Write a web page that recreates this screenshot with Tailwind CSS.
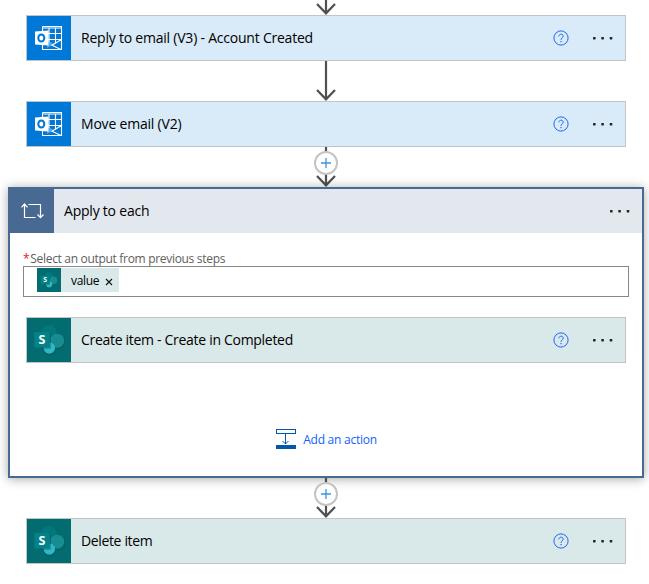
<!DOCTYPE html>
<html lang="en">
<head>
<meta charset="utf-8">
<title>Flow</title>
<script src="https://cdn.jsdelivr.net/npm/@tailwindcss/browser@4"></script>
</head>
<body class="bg-white overflow-hidden font-['Open_Sans','Noto_Sans',sans-serif] text-black">
<svg class="hidden">
  <defs>
    <symbol id="outlook" viewBox="0 0 44 44">
      <path d="M15.5 10.5H34.500V24M15.5 10.5V15M15.5 29V33.5H34.5V23.500L25 29.2L34 33.5M15 12H35M22 12V26M28.500 12V26.500M21 17.500H35M21 23.500H34" fill="none" stroke="#fff" stroke-width="1.1"/>
      <path d="M20 24L27 28.200L20 32Z" fill="#fff" opacity=".35"/>
      <path d="M8 15.500L21.500 14.500V29.500L8 28.500Z" fill="#fff"/>
      <ellipse cx="14.300" cy="22" rx="3" ry="3.500" fill="none" stroke="#0078d7" stroke-width="2"/>
    </symbol>
    <symbol id="sharepoint" viewBox="0 0 44 44">
      <circle cx="22.500" cy="17" r="9.200" fill="#035a5d" opacity=".35"/>
      <circle cx="30.500" cy="24" r="8" fill="#035a5d" opacity=".45"/>
      <circle cx="22.500" cy="31" r="6.600" fill="#035a5d" opacity=".45"/>
      <circle cx="22" cy="15.500" r="8.300" fill="#03787c"/>
      <circle cx="30.300" cy="22.700" r="7" fill="#1a9096" opacity=".9"/>
      <circle cx="22.300" cy="30" r="5.800" fill="#2fb8c4"/>
      <path d="M22 15h1.800v15.800H14V29z" fill="#034c50" opacity=".4"/>
      <rect x="7.300" y="14" width="15.400" height="15.600" rx="1" fill="#038387"/>
      <text x="14.900" y="26.200" text-anchor="middle" font-family="Open Sans, sans-serif" font-weight="700" font-size="12.500" fill="#fff">S</text>
    </symbol>
    <symbol id="help" viewBox="0 0 16 16">
      <circle cx="8" cy="8" r="7.100" fill="none" stroke="#2268f5" stroke-width="1"/>
      <path d="M5.900 6.300C5.900 3.500 10.200 3.500 10.200 6.100C10.200 7.700 8 7.900 8 9.900" fill="none" stroke="#2268f5" stroke-width="1"/>
      <rect x="7.400" y="11" width="1.200" height="1.200" fill="#2268f5"/>
    </symbol>
    <symbol id="dots" viewBox="0 0 22 4">
      <g fill="#222"><rect x="1" y="1" width="2.600" height="2.400" rx=".6"/><rect x="9.300" y="1" width="2.600" height="2.400" rx=".6"/><rect x="17.700" y="1" width="2.600" height="2.400" rx=".6"/></g>
    </symbol>
  </defs>
</svg>
<main class="ml-2 w-[636px] flex flex-col items-center">
  <svg class="block shrink-0" width="24" height="15" fill="none" stroke="#505050" stroke-width="2.200"><path d="M12 0V13.300M3 4L12 13.300L21 4"/></svg>

  <section class="w-[600px] h-[46px] border border-[#c4c4c4] bg-[#d9eaf8] flex items-center">
    <div class="size-11 bg-[#0078d7]"><svg class="size-11"><use href="#outlook"/></svg></div>
    <span class="ml-2.5 pb-0.5 flex-1 text-[14px] tracking-[-0.22px] whitespace-nowrap">Reply to email (V3) - Account Created</span>
    <svg class="size-4 mr-[23px] mb-px"><use href="#help"/></svg>
    <svg class="w-[22px] h-1 mr-[11px]"><use href="#dots"/></svg>
  </section>

  <svg class="block shrink-0" width="24" height="40" fill="none" stroke="#505050" stroke-width="2.200"><path d="M12 0V38.300M3 29L12 38.300L21 29"/></svg>

  <section class="w-[600px] h-[46px] border border-[#c4c4c4] bg-[#d9eaf8] flex items-center">
    <div class="size-11 bg-[#0078d7]"><svg class="size-11"><use href="#outlook"/></svg></div>
    <span class="ml-2.5 pb-0.5 flex-1 text-[14px] tracking-[-0.2px] whitespace-nowrap">Move email (V2)</span>
    <svg class="size-4 mr-[23px] mb-px"><use href="#help"/></svg>
    <svg class="w-[22px] h-1 mr-[11px]"><use href="#dots"/></svg>
  </section>

  <svg class="block shrink-0" width="24" height="40" fill="none" stroke="#505050" stroke-width="2.200"><path d="M12 0V38.300M3 29L12 38.300L21 29"/><circle cx="12" cy="16" r="11" fill="#fff" stroke="#c4c4c4" stroke-width="2"/><path d="M12 11V21M7 16H17" stroke="#3a96dd" stroke-width="1.300"/></svg>

  <section class="w-[636px] h-[291px] border-2 border-[#486991] bg-white shadow-[0_1px_10px_rgba(0,0,0,0.35)] flex flex-col">
    <header class="h-11 shrink-0 bg-[#e3e8ef] flex items-center">
      <div class="size-11 bg-[#486991]">
        <svg class="size-11" viewBox="0 0 44 44" fill="none" stroke="#fff" stroke-width="1.200"><path d="M14.500 15V28.500H25.500M11.500 18.300L14.500 15L17.500 18.300M18.500 15.500H30.500V28.500M27.500 25.500L30.500 28.700L33.500 25.500"/></svg>
      </div>
      <span class="ml-2.5 pb-px flex-1 text-[14px] tracking-[-0.22px]">Apply to each</span>
      <svg class="w-[22px] h-1 mr-[11px]"><use href="#dots"/></svg>
    </header>
    <div class="pt-[18px] px-[13px] flex flex-col">
      <label class="h-[15px] leading-[15px] text-[12px] tracking-[-0.31px] text-[#605e5c] whitespace-nowrap"><span class="text-[#e02020] mr-px">*</span>Select an output from previous steps</label>
      <div class="h-[31px] border border-[#8a8886] pl-[13px] pt-px">
        <div class="w-[82px] h-6 bg-[#d9e8e8] flex items-center">
          <div class="size-6 bg-[#036c70]"><svg class="size-6"><use href="#sharepoint"/></svg></div>
          <span class="ml-2.5 pt-0.5 w-[34px] text-[12px] tracking-[-0.3px]">value</span>
          <svg class="mt-[3px]" width="8" height="8" fill="none" stroke="#111" stroke-width="1.100"><path d="M1 1L7 7M7 1L1 7"/></svg>
        </div>
      </div>
    </div>
    <div class="mt-5 ml-4 w-[600px] h-[46px] shrink-0 border border-[#c4c4c4] bg-[#d9e8e8] flex items-center">
      <div class="size-11 bg-[#036c70]"><svg class="size-11"><use href="#sharepoint"/></svg></div>
      <span class="ml-2.5 pb-0.5 flex-1 text-[14px] tracking-[-0.3px] whitespace-nowrap">Create item - Create in Completed</span>
      <svg class="size-4 mr-[23px] mb-px"><use href="#help"/></svg>
      <svg class="w-[22px] h-1 mr-[11px]"><use href="#dots"/></svg>
    </div>
    <div class="mt-[65px] pl-px flex justify-center items-center gap-[7px] text-[12px] text-[#0f62fe]">
      <svg class="h-5 w-5" viewBox="0 0 20 20" fill="none" stroke="#0058ad"><rect x=".5" y=".5" width="19" height="4"/><path d="M9.500 5V15M6.500 12L9.500 15L12.500 12"/><path d="M0 16H20V20H0Z" fill="#0058ad" stroke="none"/></svg>
      <span class="pt-0.5 leading-5 tracking-[-0.25px] whitespace-nowrap">Add an action</span>
    </div>
  </section>

  <svg class="block shrink-0" width="24" height="40" fill="none" stroke="#505050" stroke-width="2.200"><path d="M12 0V38.300M3 29L12 38.300L21 29"/><circle cx="12" cy="16" r="11" fill="#fff" stroke="#c4c4c4" stroke-width="2"/><path d="M12 11V21M7 16H17" stroke="#3a96dd" stroke-width="1.300"/></svg>

  <section class="w-[600px] h-[46px] border border-[#c4c4c4] bg-[#d9e8e8] flex items-center">
    <div class="size-11 bg-[#036c70]"><svg class="size-11"><use href="#sharepoint"/></svg></div>
    <span class="ml-2.5 pb-0.5 flex-1 text-[14px] tracking-[-0.36px] whitespace-nowrap">Delete item</span>
    <svg class="size-4 mr-[23px] mb-px"><use href="#help"/></svg>
    <svg class="w-[22px] h-1 mr-[11px]"><use href="#dots"/></svg>
  </section>
</main>
</body>
</html>
